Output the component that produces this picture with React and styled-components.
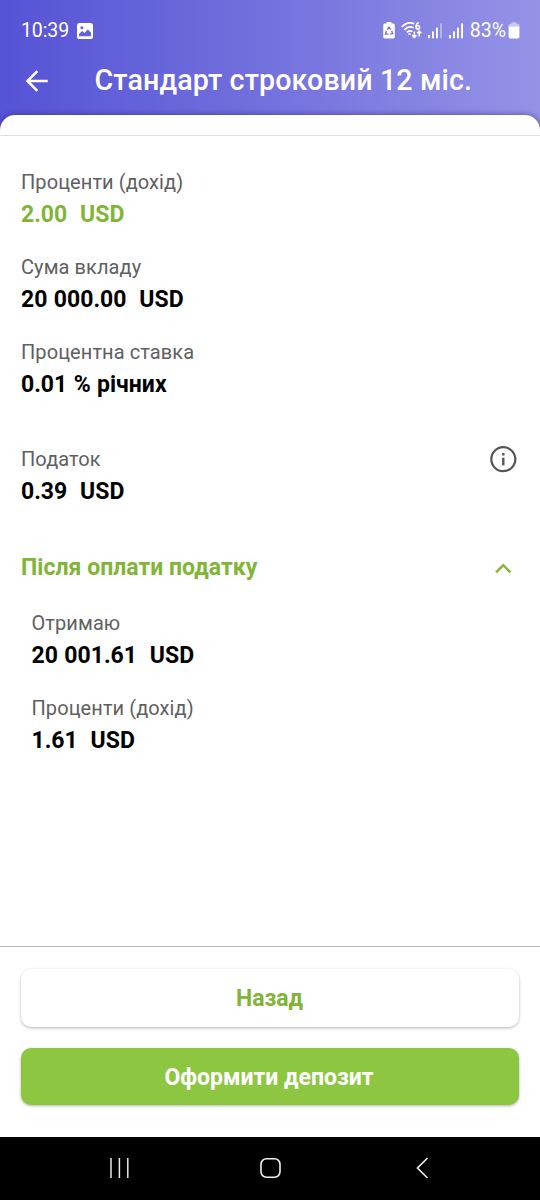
import React from "react";
import styled, { createGlobalStyle } from "styled-components";

export default function App() {
  return (
    <Screen>
      <GlobalStyle />
      <Header>
        <StatusBar>
          <Clock>10:39</Clock>
          <PictureIcon />
          <StatusIcons>
            <BatterySaverIcon />
            <WifiIcon />
            <SignalIcon weak />
            <SignalIcon />
            <Percent>83%</Percent>
            <BatteryIcon />
          </StatusIcons>
        </StatusBar>
        <TitleBar>
          <BackButton aria-label="Назад">
            <svg width="24" height="24" viewBox="0 0 24 24" fill="none" stroke="#fff" strokeWidth="2.5">
              <path d="M22.7 12H3M12.3 2.2L2.5 12l9.8 9.8" />
            </svg>
          </BackButton>
          <Title>Стандарт строковий 12 міс.</Title>
        </TitleBar>
      </Header>
      <Sheet>
        <SheetTop />
        <Details>
          {/* deposit */}
          <Field>
            <Label>Проценти (дохід)</Label>
            <Value $green>2.00{"  "}USD</Value>
          </Field>
          <Field>
            <Label>Сума вкладу</Label>
            <Value>20 000.00{"  "}USD</Value>
          </Field>
          <Field>
            <Label>Процентна ставка</Label>
            <Value>0.01 % річних</Value>
          </Field>
          {/* tax */}
          <TaxRow>
            <Field>
              <Label>Податок</Label>
              <Value>0.39{"  "}USD</Value>
            </Field>
            <InfoIcon />
          </TaxRow>
          {/* after tax */}
          <AccordionHeader>
            <AccordionTitle>Після оплати податку</AccordionTitle>
            <ChevronUp />
          </AccordionHeader>
          <AccordionBody>
            <Field>
              <Label>Отримаю</Label>
              <Value>20 001.61{"  "}USD</Value>
            </Field>
            <Field>
              <Label>Проценти (дохід)</Label>
              <Value>1.61{"  "}USD</Value>
            </Field>
          </AccordionBody>
        </Details>
        <Footer>
          <Button>Назад</Button>
          <Button $primary>Оформити депозит</Button>
        </Footer>
      </Sheet>
      <NavBar>
        <svg width="24" height="24" viewBox="0 0 24 24" stroke="#e8e8e8" strokeWidth="1.5">
          <path d="M4 2v20M12.4 2v20M20.8 2v20" />
        </svg>
        <svg width="24" height="24" viewBox="0 0 24 24" fill="none" stroke="#f0f0f0" strokeWidth="1.6">
          <rect x="3" y="2.8" width="19" height="18.4" rx="5.4" />
        </svg>
        <svg width="24" height="24" viewBox="0 0 24 24" fill="none" stroke="#f0f0f0" strokeWidth="1.6">
          <path d="M18.5 2l-10 10 10 10" />
        </svg>
      </NavBar>
    </Screen>
  );
}

const PictureIcon = () => (
  <svg width="16" height="16" viewBox="0 0 16 16">
    <rect width="16" height="16" rx="2.6" fill="#fff" />
    <circle cx="4.9" cy="4.8" r="1.5" fill="#6461da" />
    <path
      d="M2 13.2V11l3.2-3 2.2 2.1 3.4-3.7L14 9.6v3.6z"
      fill="#6461da"
    />
  </svg>
);

const BatterySaverIcon = () => (
  <svg width="12" height="17" viewBox="0 0 12 17">
    <path
      d="M3.6 0h4.8v1.6h1.7c1 0 1.7.7 1.7 1.7v11.4c0 1-.7 1.7-1.7 1.7H1.9c-1 0-1.7-.7-1.7-1.7V3.3c0-1 .7-1.7 1.7-1.7h1.7z"
      fill="#fff"
    />
    <path
      d="M4.3 7.6L6 5.2l1.7 2.4M8.6 8.8l1.1 2.7-2.4.7M5.4 12.2H2.4l1-3.2"
      fill="none"
      stroke="#726fc4"
      strokeWidth="1.3"
    />
  </svg>
);

const WifiIcon = () => (
  <svg width="21" height="17" viewBox="0 0 21 17" fill="none" stroke="#fff">
    <path
      d="M.8 5C4.4 1 9.4.3 13.2 1.7M3.3 7.8c2.6-2.8 6.3-3.4 9.2-2M5.9 10.4c1.5-1.6 3.7-1.9 5.5-.9"
      strokeWidth="1.8"
    />
    <circle cx="8.5" cy="11.9" r="1.2" fill="#fff" stroke="none" />
    <path d="M17.8.8c-1.8.4-2.8 2-2.8 4" strokeWidth="1.5" />
    <circle cx="16.8" cy="5.2" r="1.8" strokeWidth="1.5" />
    <path
      d="M13.3 9.6v5.8M11.2 13.3l2.1 2.2 2.1-2.2M18.2 14.6V9.2M16.1 11.3l2.1-2.2 2.1 2.2"
      strokeWidth="1.6"
    />
  </svg>
);

const SignalIcon = ({ weak }) => (
  <svg width="15" height="16" viewBox="0 0 15 16" fill="#fff">
    <rect x="0" y="12" width="1.9" height="3.3" />
    <rect x="4" y="8.4" width="1.9" height="6.9" />
    <rect x="8" y="4.6" width="1.9" height="10.7" />
    <rect x="12.1" y=".4" width="1.9" height="14.9" opacity={weak ? 0.4 : 1} />
  </svg>
);

const BatteryIcon = () => (
  <svg width="12" height="17" viewBox="0 0 12 17">
    <path
      d="M3.5.2h5v1.5h1.2c1 0 1.7.7 1.7 1.7v1.4H.6V3.4c0-1 .7-1.7 1.7-1.7h1.2z"
      fill="#fff"
      opacity=".5"
    />
    <path d="M.6 4.6h10.8v10.2c0 1-.7 1.7-1.7 1.7H2.3c-1 0-1.7-.7-1.7-1.7z" fill="#fff" />
  </svg>
);

const InfoIcon = () => (
  <svg width="28" height="28" viewBox="0 0 28 28" fill="none" stroke="#555">
    <circle cx="14.3" cy="14.2" r="12" strokeWidth="2.2" />
    <path d="M14.3 12.7v7.6M14.3 8v2.4" strokeWidth="2.4" />
  </svg>
);

const ChevronUp = () => (
  <svg width="28" height="28" viewBox="0 0 28 28" fill="none" stroke="#80b537" strokeWidth="2.4">
    <path d="M7.1 18.4l7.2-7.2 7.2 7.2" />
  </svg>
);

const GlobalStyle = createGlobalStyle`
  * {
    box-sizing: border-box;
  }
  body {
    margin: 0;
    font-family: Roboto, "Noto Sans", sans-serif;
    background: #ffffff;
  }
  svg {
    display: block;
    flex-shrink: 0;
  }
`;

const Screen = styled.div`
  display: flex;
  flex-direction: column;
  width: 540px;
  height: 1200px;
  overflow: hidden;
  background: linear-gradient(90deg, #5653d6 0%, #7371dd 50%, #9593e6 100%);
`;

const Header = styled.header`
  flex-shrink: 0;
  height: 115px;
  color: #ffffff;
`;

const StatusBar = styled.div`
  display: flex;
  align-items: center;
  height: 46px;
  padding: 15px 20px 0 21px;
`;

const Clock = styled.span`
  width: 56px;
  font-size: 19.5px;
  letter-spacing: -0.1px;
`;

const StatusIcons = styled.div`
  display: flex;
  align-items: center;
  gap: 6px;
  margin-left: auto;
`;

const Percent = styled.span`
  margin-right: -4px;
  font-size: 19.5px;
`;

const TitleBar = styled.div`
  display: flex;
  align-items: center;
  height: 69px;
  padding-left: 25px;
`;

const BackButton = styled.button`
  width: 69.5px;
  padding: 0;
  border: 0;
  background: none;
`;

const Title = styled.h1`
  margin: 0;
  padding-bottom: 2px;
  font-size: 28.6px;
  font-weight: 500;
  letter-spacing: 0.13px;
  white-space: nowrap;
`;

const Sheet = styled.main`
  display: flex;
  flex: 1;
  flex-direction: column;
  background: #ffffff;
  border-radius: 15px 15px 0 0;
  box-shadow: 0 0 6px rgba(40, 30, 110, 0.6);
`;

const SheetTop = styled.div`
  height: 21px;
  border-bottom: 1px solid #dedede;
`;

const Details = styled.section`
  flex: 1;
  padding: 29.6px 21px 0;
`;

const Field = styled.div`
  & + & {
    margin-top: 20.3px;
  }
`;

const Label = styled.div`
  font-size: 20px;
  line-height: 33px;
  letter-spacing: 0.08px;
  color: #5f5f5f;
`;

const Value = styled.div`
  font-size: 23px;
  line-height: 32px;
  font-weight: 700;
  word-spacing: 0.7px;
  white-space: pre;
  color: ${(props) => (props.$green ? "#80b537" : "#000000")};
`;

const TaxRow = styled.div`
  display: flex;
  justify-content: space-between;
  margin-top: 41.6px;
  padding-right: 2px;

  svg {
    margin-top: 2px;
  }
`;

const AccordionHeader = styled.div`
  display: flex;
  align-items: center;
  justify-content: space-between;
  margin-top: 44px;
  padding-right: 2px;
`;

const AccordionTitle = styled.h2`
  margin: 0;
  font-size: 23px;
  line-height: 32px;
  font-weight: 700;
  letter-spacing: 0.03px;
  color: #80b537;
`;

const AccordionBody = styled.div`
  padding: 22.8px 0 0 10.5px;
`;

const Footer = styled.footer`
  display: flex;
  flex-direction: column;
  gap: 21px;
  height: 191px;
  padding: 22px 21px 0;
  border-top: 1px solid #b8b8b8;
`;

const Button = styled.button`
  height: ${(props) => (props.$primary ? "57px" : "58px")};
  padding: ${(props) => (props.$primary ? "1px 2px 0 0" : "0 1px 0 0")};
  border: 0;
  border-radius: 10px;
  font-family: inherit;
  font-size: 23px;
  font-weight: 700;
  color: ${(props) => (props.$primary ? "#ffffff" : "#80b537")};
  background: ${(props) => (props.$primary ? "#8dc641" : "#ffffff")};
  box-shadow: 0 1px 3px rgba(0, 0, 0, 0.3);
`;

const NavBar = styled.nav`
  display: flex;
  flex-shrink: 0;
  align-items: center;
  justify-content: center;
  gap: 127px;
  height: 63px;
  padding-bottom: 1px;
  background: #000000;
`;
